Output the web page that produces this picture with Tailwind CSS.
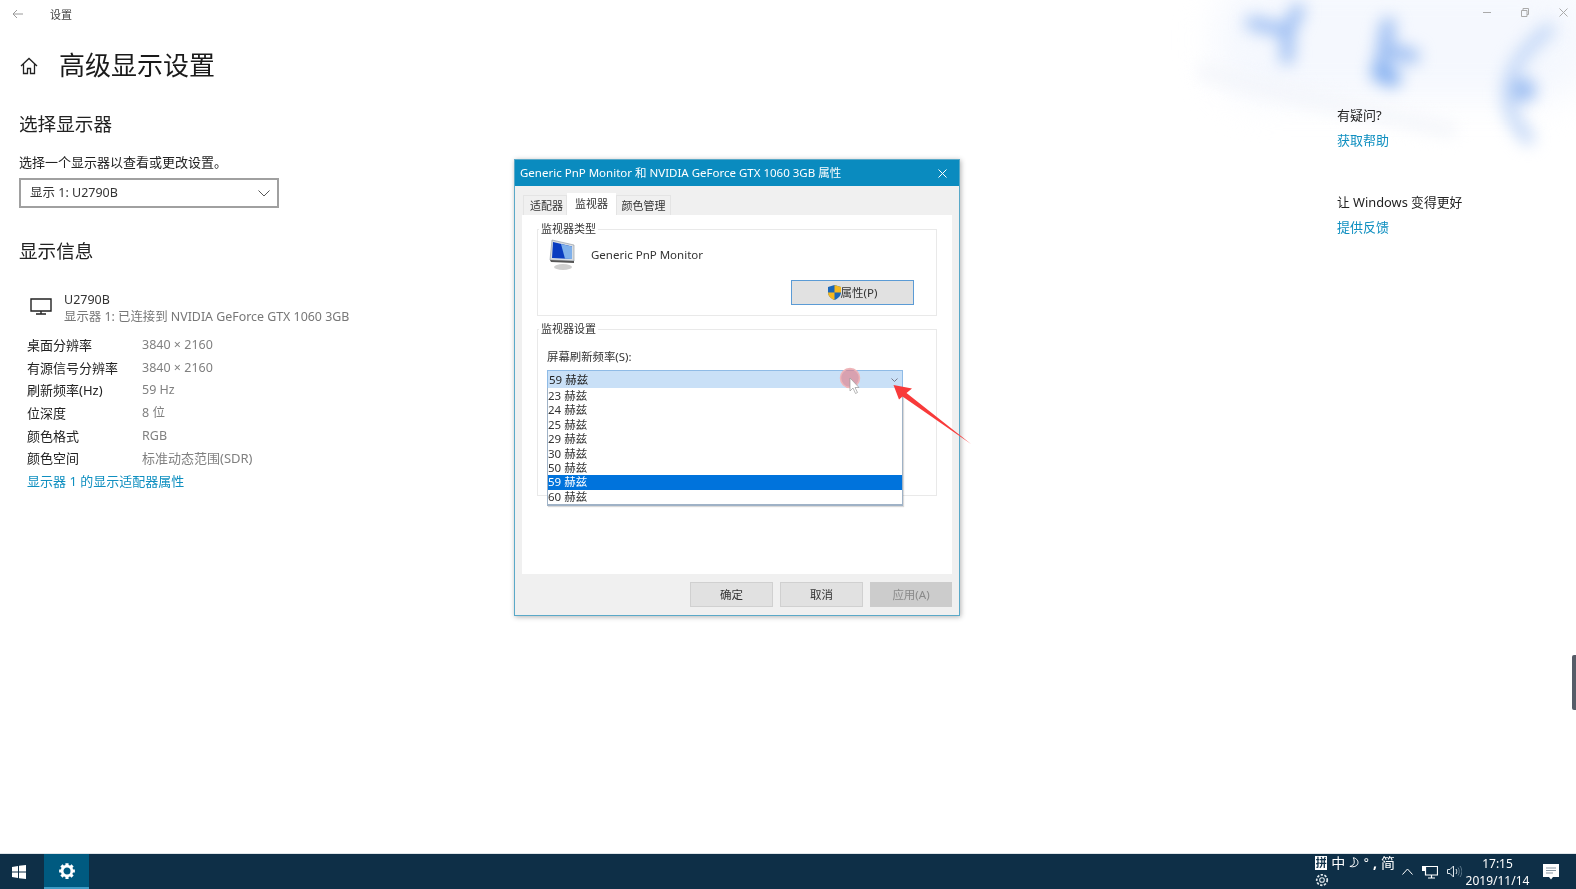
<!doctype html>
<html lang="zh-CN">
<head>
<meta charset="utf-8">
<script src="https://cdn.jsdelivr.net/npm/@tailwindcss/browser@4"></script>
<title>设置</title>
</head>
<body class="m-0 bg-white">
<div class="relative flex h-[889px] w-[1576px] flex-col overflow-hidden bg-white font-['Noto_Sans','Noto_Sans_CJK_SC',sans-serif] text-[13px] text-[#222] blur-[0.4px]">

  <!-- blurred backdrop art -->
  <div class="absolute left-[1215px] top-[-20px] h-[120px] w-[380px] rounded-[50px] bg-[#f5f8fe] blur-[18px]"></div>
  <svg class="absolute left-[1170px] top-0 h-[190px] w-[406px] blur-[8px]" viewBox="1170 0 406 190" fill="none" stroke-linecap="round">
    <path d="M1205 72 Q1290 95 1450 130" stroke="#f3f5fa" stroke-width="14"/>
    <path d="M1252 23 L1288 31 L1287 58 M1288 31 L1298 10" stroke="#9dbef2" stroke-width="13"/>
    <path d="M1388 25 L1380 75 M1385 50 L1412 56" stroke="#9dbef2" stroke-width="15"/>
    <path d="M1380 72 L1392 78" stroke="#85b0f0" stroke-width="18"/>
    <path d="M1548 30 Q1480 85 1528 138" stroke="#c6d9f7" stroke-width="14"/>
    <circle cx="1524" cy="90" r="12" fill="#9dbef2" stroke="none"/>
  </svg>

  <!-- settings window -->
  <div class="relative flex min-h-0 flex-1">
    <div class="flex w-[1337px] flex-col">
      <div class="flex h-[27px] items-center pl-[12px]">
        <svg class="h-[10px] w-[11px]" viewBox="0 0 11 10" fill="none" stroke="#9a9a9a" stroke-width="1"><path d="M11 5H1M5 1 1 5l4 4"/></svg>
        <span class="ml-[27px] mt-[1px] text-[11px] leading-none text-[#444]">设置</span>
      </div>
      <div class="ml-[20px] mt-[20px] flex h-[37px] items-center">
        <svg class="h-[18px] w-[18px]" viewBox="0 0 18 18" fill="none" stroke="#222" stroke-width="1.3"><path d="M1 9 9 1.500 17 9M3.500 7v9.500h4v-5h3v5h4V7"/></svg>
        <h1 class="ml-[21px] text-[26px] font-normal leading-[37px] text-[#1a1a1a]">高级显示设置</h1>
      </div>
      <h2 class="ml-[19px] mt-[27px] text-[18.600px] font-normal leading-[26px] text-[#222]">选择显示器</h2>
      <p class="ml-[19px] mt-[15px] text-[13px] leading-[20px]">选择一个显示器以查看或更改设置。</p>
      <div class="ml-[19px] mt-[6px] flex h-[30px] w-[260px] items-center justify-between border-2 border-[#a0a0a0] pl-[9px] pr-[7px]">
        <span class="text-[12.500px] text-[#333]">显示 1: U2790B</span>
        <svg class="h-[7px] w-[12px]" viewBox="0 0 12 7" fill="none" stroke="#555" stroke-width="1"><path d="M.5.5 6 6 11.500.5"/></svg>
      </div>
      <h2 class="ml-[19px] mt-[30px] text-[18.600px] font-normal leading-[26px] text-[#222]">显示信息</h2>
      <div class="ml-[30px] mt-[27px] flex">
        <svg class="mt-[7px] h-[17px] w-[22px]" viewBox="0 0 22 17" fill="none" stroke="#222" stroke-width="1.400"><path d="M1 1h20v12H1zM11 13v3M6 16h10"/></svg>
        <div class="ml-[12px] leading-[17px]">
          <div class="text-[12.500px] text-[#333]">U2790B</div>
          <div class="text-[12.400px] text-[#777]">显示器 1: 已连接到 NVIDIA GeForce GTX 1060 3GB</div>
        </div>
      </div>
      <div class="ml-[27px] mt-[9px] grid w-[340px] auto-rows-[22.700px] grid-cols-[115px_1fr] items-center text-[13px] leading-[22.700px]">
        <span>桌面分辨率</span><span class="text-[12.500px] text-[#808080]">3840 × 2160</span>
        <span>有源信号分辨率</span><span class="text-[12.500px] text-[#808080]">3840 × 2160</span>
        <span>刷新频率(Hz)</span><span class="text-[12.500px] text-[#808080]">59 Hz</span>
        <span>位深度</span><span class="text-[12.500px] text-[#808080]">8 位</span>
        <span>颜色格式</span><span class="text-[12.500px] text-[#808080]">RGB</span>
        <span>颜色空间</span><span class="text-[#808080]">标准动态范围(SDR)</span>
        <span class="col-span-2 text-[#0f8fc0]">显示器 1 的显示适配器属性</span>
      </div>
    </div>
    <div class="relative flex flex-1 flex-col">
      <div class="mr-[8px] mt-[6px] flex h-[12px] items-center justify-end gap-[30px]">
        <svg class="h-[9px] w-[8px]" viewBox="0 0 8 9" stroke="#aaa" stroke-width="1"><path d="M0 4.500h8"/></svg>
        <svg class="h-[9px] w-[8px]" viewBox="0 0 8 9" fill="none" stroke="#aaa" stroke-width="1"><path d="M.5 2.500h5.500v6H.5zM2 2.500V.5h5.500v6H6"/></svg>
        <svg class="h-[9px] w-[9px]" viewBox="0 0 9 9" stroke="#aaa" stroke-width="1"><path d="M.5.5l8 8M8.500.5l-8 8"/></svg>
      </div>
      <div class="mt-[87px] leading-[20px]">有疑问?</div>
      <div class="mt-[5px] leading-[20px] text-[#0f8fc0]">获取帮助</div>
      <div class="mt-[42px] text-[12.800px] leading-[20px]">让 Windows 变得更好</div>
      <div class="mt-[5px] leading-[20px] text-[#0f8fc0]">提供反馈</div>
    </div>
  </div>

  <!-- scrollbar thumb -->
  <div class="absolute left-[1572px] top-[655px] h-[55px] w-[4px] rounded-l-[2px] bg-[#565c68]"></div>

  <!-- dialog -->
  <div class="absolute left-[514px] top-[159px] flex h-[457px] w-[446px] flex-col border border-[#5aa9c8] bg-[#f0f0f0] text-[11.500px] shadow-[1px_1px_5px_rgba(0,0,0,0.3)]">
    <div class="flex h-[26px] shrink-0 items-center justify-between bg-[#0a8bbf] pl-[5px] pr-[12px] text-white">
      <span class="text-[11.500px] leading-none">Generic PnP Monitor 和 NVIDIA GeForce GTX 1060 3GB 属性</span>
      <svg class="h-[9px] w-[9px]" viewBox="0 0 9 9" stroke="#fff" stroke-width="1"><path d="M.5.5l8 8M8.500.5l-8 8"/></svg>
    </div>
    <div class="flex min-h-0 flex-1 flex-col px-[7px] pb-[8px]">
      <div class="flex h-[29px] shrink-0 items-end text-[#333]">
        <div class="ml-[1px] flex h-[20px] w-[44px] items-center justify-center border border-b-0 border-[#e4e4e4] bg-[#f0f0f0] pl-[3px] pt-[2px] text-[11px]">适配器</div>
        <div class="flex h-[22px] w-[49px] items-center justify-center bg-white text-[11px]">监视器</div>
        <div class="flex h-[20px] w-[55px] items-center justify-center border border-b-0 border-[#e4e4e4] bg-[#f0f0f0] pt-[2px] text-[11px]">颜色管理</div>
      </div>
      <div class="relative flex h-[359px] shrink-0 flex-col bg-white px-[15px] pt-[14px]">
        <!-- monitor type group -->
        <div class="relative h-[87px] shrink-0 border border-[#e9e9e9]">
          <span class="absolute -top-[8px] left-[1px] bg-white px-[2px] text-[11px] leading-[14px] text-[#333]">监视器类型</span>
          <div class="ml-[10px] mt-[9px] flex items-center">
            <svg class="h-[32px] w-[28px]" viewBox="0 0 28 32">
              <ellipse cx="15" cy="28" rx="9" ry="3" fill="#cfcfcf"/>
              <path d="M4 1 26 6V22L2 21Z" fill="#d8dde2" stroke="#8a9199" stroke-width=".6"/>
              <path d="M5 3 24 7.500V20L4 19Z" fill="#0a3cc0"/>
              <path d="M13 5 24 7.500V20L17 19.700Z" fill="#7fb0ea"/>
              <path d="M2 21 26 22V24L3 23Z" fill="#555"/>
            </svg>
            <span class="ml-[15px] text-[#333]">Generic PnP Monitor</span>
          </div>
          <div class="mr-[22px] mt-[9px] flex justify-end">
            <div class="flex h-[25px] w-[123px] items-center justify-center border border-[#5b9bd5] bg-[#e1e1e1] text-[#333]">
              <svg class="h-[15px] w-[13px]" viewBox="0 0 13 15"><path d="M6.500 0 13 2v5c0 4-3 6.500-6.500 8C3 13.500 0 11 0 7V2Z" fill="#1a66b8"/><path d="M6.500 0 13 2v5.500H6.500ZM6.500 7.500V15C3 13.500 0 11 0 7.500Z" fill="#f5b81e"/></svg>
              <span>属性(P)</span>
            </div>
          </div>
        </div>
        <!-- monitor settings group -->
        <div class="relative mt-[13px] h-[167px] shrink-0 border border-[#e9e9e9]">
          <span class="absolute -top-[8px] left-[1px] bg-white px-[2px] text-[11px] leading-[14px] text-[#333]">监视器设置</span>
          <div class="ml-[9px] mt-[19px] text-[11.400px] leading-[16px] text-[#333]">屏幕刷新频率(S):</div>
          <div class="relative ml-[9px] mt-[5px] w-[356px]">
            <div class="flex h-[19px] items-center justify-between border border-[#8fbbe6] bg-[#c9e0f7] pl-[1px] pr-[4px] text-[#222]">
              <span>59 赫兹</span>
              <svg class="h-[4px] w-[7px]" viewBox="0 0 7 4" fill="none" stroke="#778" stroke-width="1"><path d="M.5.5l3 3 3-3"/></svg>
            </div>
            <ul class="absolute left-0 top-[18px] w-[356px] border-x border-b-2 border-x-[#9fb2c6] border-b-[#9fb2c6] bg-white pt-[1px] leading-[14.400px] text-[#333] shadow-[1px_1px_1px_rgba(0,0,0,0.15)]">
              <li class="h-[14.400px]">23 赫兹</li>
              <li class="h-[14.400px]">24 赫兹</li>
              <li class="h-[14.400px]">25 赫兹</li>
              <li class="h-[14.400px]">29 赫兹</li>
              <li class="h-[14.400px]">30 赫兹</li>
              <li class="h-[14.400px]">50 赫兹</li>
              <li class="h-[14.400px] bg-[#0073dc] text-white">59 赫兹</li>
              <li class="h-[14.400px]">60 赫兹</li>
            </ul>
          </div>
        </div>
      </div>
      <div class="mt-[8px] flex h-[25px] shrink-0 justify-end gap-[7px] text-[#333]">
        <div class="flex w-[83px] items-center justify-center border border-[#d0d0d0] bg-[#e1e1e1]">确定</div>
        <div class="flex w-[83px] items-center justify-center border border-[#d0d0d0] bg-[#e1e1e1]">取消</div>
        <div class="flex w-[82px] items-center justify-center bg-[#cccccc] text-[#8a8a8a]">应用(A)</div>
      </div>
    </div>
  </div>

  <!-- recording cursor highlight and annotation arrow -->
  <svg class="pointer-events-none absolute left-0 top-0 h-[889px] w-[1576px]" viewBox="0 0 1576 889">
    <circle cx="850" cy="378" r="9.500" fill="#e0808a" fill-opacity=".65" stroke="#eeb4b8" stroke-width="1.500"/>
    <path d="M850 378V391L853 388 855.500 393.500 857.500 392.500 855 387.500H859Z" fill="#fff" stroke="#9a9a9a" stroke-width=".7"/>
    <path d="M893.500 385 912 388.500 906.500 393 971 444 902.500 396.500 899 399.500Z" fill="#f83a3a"/>
  </svg>

  <!-- taskbar -->
  <div class="relative flex h-[36px] shrink-0 items-stretch border-t border-[#dfe5e9] bg-[#0e2f47] text-white">
    <div class="flex w-[44px] items-center justify-center pr-[6px]">
      <svg class="h-[14px] w-[14px]" viewBox="0 0 14 14" fill="#fff"><path d="M0 2 6 1v5.500H0ZM7 .8 14 0v6.500H7ZM0 7.500h6V13L0 12ZM7 7.500h7V14L7 13.200Z"/></svg>
    </div>
    <div class="flex w-[45px] items-center justify-center border-b-2 border-[#3f9bc4] bg-[#005a80]">
      <svg class="h-[18px] w-[18px]" viewBox="0 0 24 24" fill="none" stroke="#fff"><circle cx="12" cy="12" r="6.500" stroke-width="3.600"/><path stroke-width="4.200" d="M12 1.500v4M12 18.500v4M1.500 12h4M18.500 12h4M4.600 4.600l2.800 2.800M16.600 16.600l2.800 2.800M4.600 19.400l2.800-2.800M16.600 7.400l2.800-2.800"/></svg>
    </div>
    <div class="ml-[1226px] flex w-[80px] flex-col pt-[1px]">
      <div class="flex h-[15px] items-center gap-[4px] text-[14px] leading-none">
        <span class="flex h-[14px] w-[14px] items-center justify-center bg-white text-[11px] font-bold leading-none text-[#0e2f47]">拼</span>
        <span>中</span>
        <svg class="h-[13px] w-[12px]" viewBox="0 0 12 13" fill="none" stroke="#fff" stroke-width="1.100"><path d="M5 1c4 1 6 4 5 7-1 3-5 4-9 3 3-1 5-2 5-5 0-2-.5-3.500-1-5Z"/></svg>
        <span class="text-[12px]">°</span><span class="font-bold">,</span>
        <span>简</span>
      </div>
      <svg class="mt-[3px] h-[14px] w-[14px]" viewBox="0 0 24 24" fill="none" stroke="#dfe7ec" stroke-width="1.800"><circle cx="12" cy="12" r="4"/><circle cx="12" cy="12" r="9" stroke-dasharray="4 2.500" stroke-width="3"/></svg>
    </div>
    <div class="ml-[7px] flex items-center gap-[9px]">
      <svg class="h-[7px] w-[11px]" viewBox="0 0 11 7" fill="none" stroke="#fff" stroke-width="1"><path d="M.5 6.500l5-5.500 5 5.500"/></svg>
      <svg class="h-[14px] w-[16px]" viewBox="0 0 16 14" fill="none" stroke="#fff" stroke-width="1.200"><path d="M3.500 1.500H15.500V10H3.500ZM9.500 10V13M6 13h7"/><path d="M0 1h3v5H0Z" fill="#fff" stroke="none"/></svg>
      <svg class="h-[13px] w-[15px]" viewBox="0 0 15 13" fill="none" stroke="#dfe7ec" stroke-width="1"><path d="M.5 4.500h2.500L6.500 1v11L3 8.500H.5ZM9 4c1 1.500 1 3.500 0 5"/><path d="M11 2.500c1.700 2.500 1.700 5.500 0 8M13 1c2.500 3.500 2.500 7.500 0 11" stroke="#5f7a8c"/></svg>
    </div>
    <div class="-ml-[2px] flex w-[75px] flex-col items-center justify-center text-[12px] leading-[17px]">
      <span>17:15</span><span>2019/11/14</span>
    </div>
    <div class="ml-[8px] flex items-center">
      <svg class="h-[16px] w-[16px]" viewBox="0 0 16 16"><path d="M0 0H16V13H10L8 15.500 6 13H0Z" fill="#fff"/><path d="M3 4h10M3 6.500h10M3 9h7" stroke="#8a99a5" stroke-width="1"/></svg>
    </div>
  </div>
</div>
</body>
</html>
